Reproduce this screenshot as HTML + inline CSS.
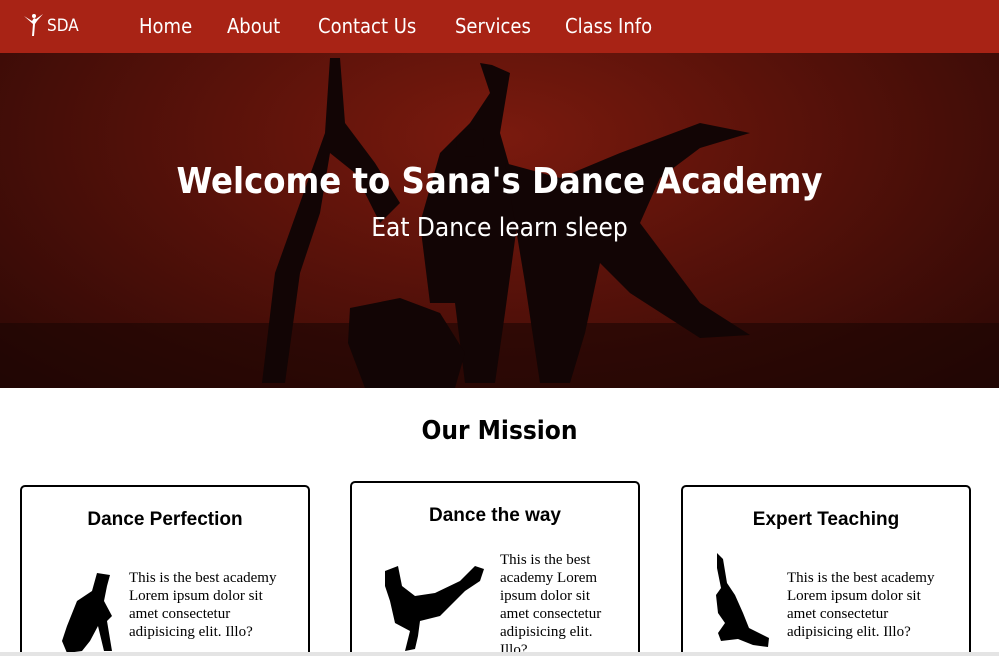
<!DOCTYPE html>
<html><head><meta charset="utf-8"><style>
*{margin:0;padding:0;box-sizing:border-box}
html,body{width:999px;height:656px;overflow:hidden}
body{background:#fff;font-family:"Liberation Sans",sans-serif;position:relative}
nav{position:absolute;left:0;top:0;width:999px;height:53px;background:#a82315;color:#fff}
nav span{position:absolute;top:14px;font-size:20px;font-family:"DejaVu Sans Condensed","Liberation Sans",sans-serif}
.hero{position:absolute;top:53px;left:0;width:999px;height:335px;background:radial-gradient(ellipse at 50% 25%,#7a1a0e 0%,#5a120a 40%,#2a0805 100%);overflow:hidden}
.hero h1{position:absolute;top:108px;width:100%;text-align:center;color:#fff;font-size:36px;font-weight:bold;font-family:"DejaVu Sans Condensed",sans-serif}
.hero h2{position:absolute;top:160px;width:100%;text-align:center;color:#fff;font-size:26px;font-weight:normal;font-family:"DejaVu Sans Condensed",sans-serif}
.mission{position:absolute;top:416px;width:100%;text-align:center;font-size:26px;font-family:"DejaVu Sans Condensed",sans-serif;font-weight:bold}
.card{position:absolute;width:290px;height:190px;border:2px solid #000;border-radius:5px;background:#fff}
.card h3{position:absolute;width:100%;text-align:center;font-size:19px;font-weight:bold}
.card p{position:absolute;font-family:"Liberation Serif",serif;font-size:15px;line-height:18px}
.card svg{position:absolute}
.bar{position:absolute;left:0;top:652px;width:999px;height:4px;background:#e4e4e4}
</style></head><body>
<nav>
<svg style="position:absolute;left:22px;top:12px" width="24" height="26" viewBox="0 0 24 26"><path d="M2 4 L10 9 L12 6 L14 7 L21 2 L15 9 L13 12 L12 24 L10 24 L11 12 Z" fill="#fff"/><circle cx="12" cy="4" r="2" fill="#fff"/></svg>
<span style="left:47px;font-size:17px;top:16px">SDA</span>
<span style="left:139px">Home</span><span style="left:227px">About</span><span style="left:318px">Contact Us</span><span style="left:455px">Services</span><span style="left:565px">Class Info</span>
</nav>
<div class="hero">
<svg width="999" height="335" style="position:absolute;left:0;top:0">
<rect x="0" y="270" width="999" height="65" fill="#1a0503" opacity=".6"/>
<g fill="#120505">
<path d="M330 5 L340 5 L345 70 L375 110 L400 150 L380 170 L355 120 L330 100 L320 160 L300 220 L285 330 L262 330 L275 220 L300 150 L325 80 Z"/>
<path d="M480 10 L492 12 L510 20 L500 80 L520 150 L505 260 L495 330 L465 330 L455 250 L430 250 L420 170 L440 100 L470 70 L490 40 Z"/>
<circle cx="470" cy="90" r="14"/>
<path d="M505 110 L560 125 L620 100 L700 70 L750 80 L700 95 L660 125 L640 170 L700 250 L750 282 L700 285 L630 240 L600 210 L585 280 L570 330 L540 330 L525 230 Z"/>
<path d="M350 255 L400 245 L440 260 L465 300 L455 335 L365 335 L348 290 Z"/>
</g></svg>
<h1>Welcome to Sana's Dance Academy</h1>
<h2>Eat Dance learn sleep</h2>
</div>
<div class="mission">Our Mission</div>
<div class="card" style="left:20px;top:485px">
<h3 style="top:22px">Dance Perfection</h3>
<svg style="left:30px;top:84px" width="65" height="82" viewBox="0 0 65 82"><path d="M45 2 L58 4 L55 15 L52 30 L60 45 L55 50 L60 80 L52 80 L46 55 L38 70 L30 80 L15 82 L10 70 L15 55 L25 30 L40 20 Z" fill="#000"/></svg>
<p style="left:107px;top:82px">This is the best academy<br>Lorem ipsum dolor sit<br>amet consectetur<br>adipisicing elit. Illo?</p>
</div>
<div class="card" style="left:350px;top:481px">
<h3 style="top:22px">Dance the way</h3>
<svg style="left:28px;top:78px" width="108" height="98" viewBox="0 0 108 98"><path d="M5 10 L18 5 L22 25 L35 35 L55 32 L80 20 L95 5 L104 8 L100 20 L85 30 L70 45 L60 55 L40 60 L38 75 L35 88 L25 90 L30 70 L15 62 L10 40 L5 25 Z" fill="#000"/></svg>
<p style="left:148px;top:68px">This is the best<br>academy Lorem<br>ipsum dolor sit<br>amet consectetur<br>adipisicing elit.<br>Illo?</p>
</div>
<div class="card" style="left:681px;top:485px">
<h3 style="top:22px">Expert Teaching</h3>
<svg style="left:30px;top:66px" width="60" height="96" viewBox="0 0 60 96"><path d="M4 0 L10 6 L14 30 L22 42 L30 60 L36 75 L56 85 L55 94 L40 92 L25 86 L8 88 L5 80 L12 70 L5 60 L3 42 L8 35 L4 15 Z" fill="#000"/></svg>
<p style="left:104px;top:82px">This is the best academy<br>Lorem ipsum dolor sit<br>amet consectetur<br>adipisicing elit. Illo?</p>
</div>
<div class="bar"></div>
</body></html>
